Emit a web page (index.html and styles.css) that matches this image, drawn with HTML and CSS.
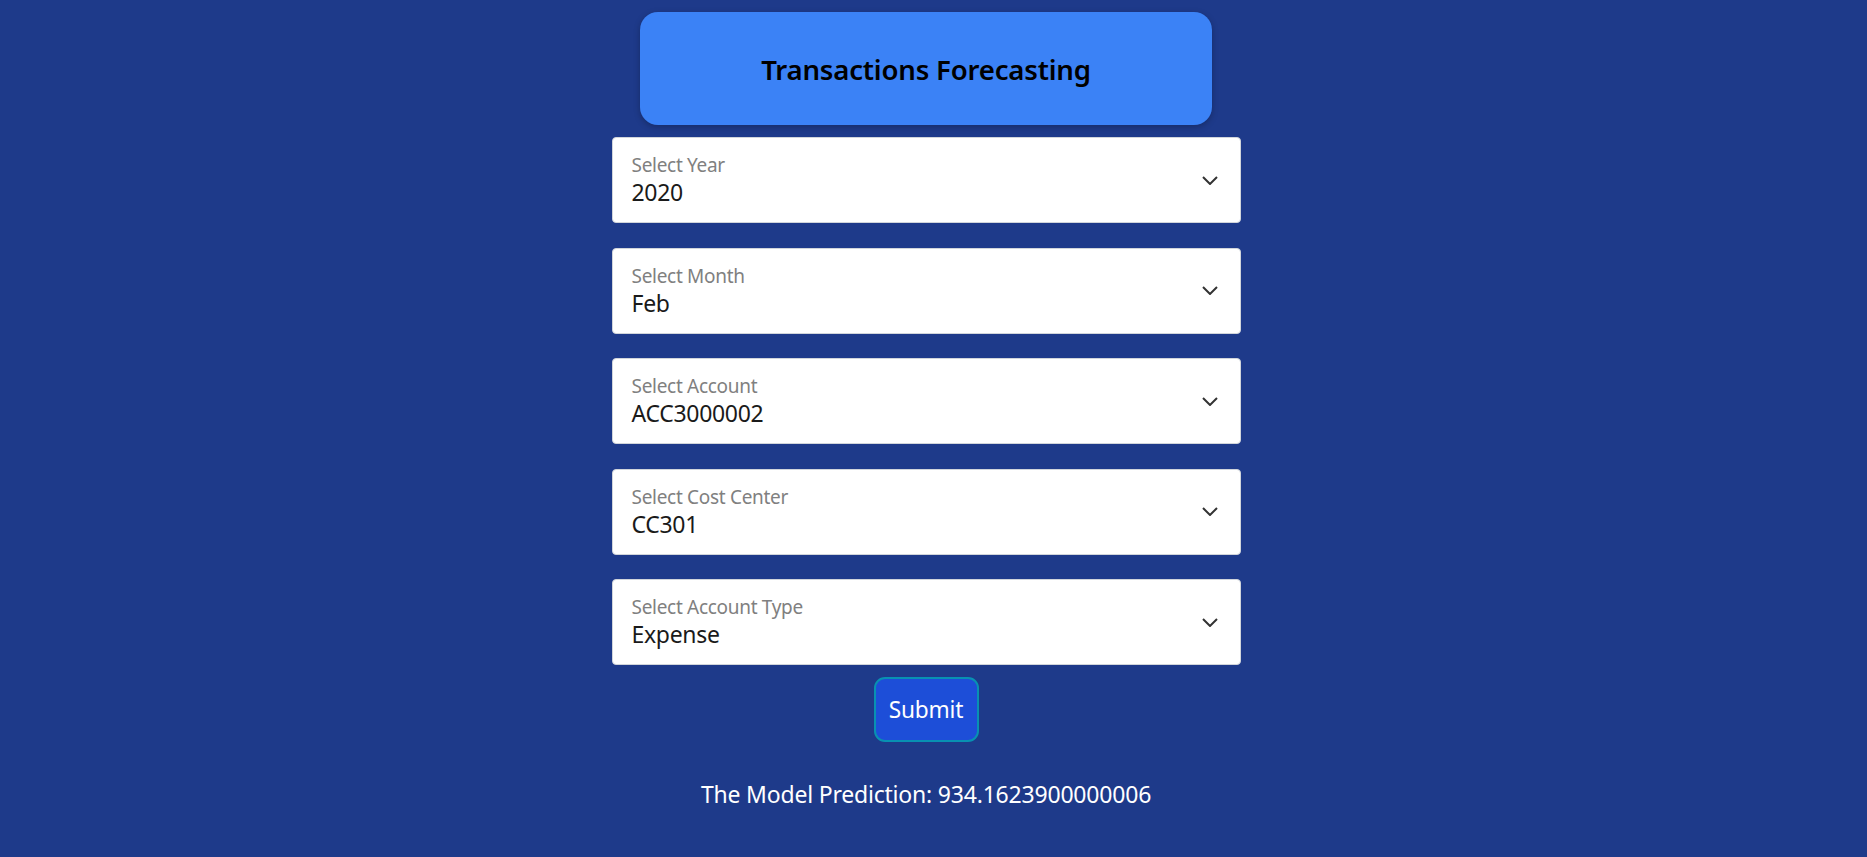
FILE: index.html
```html
<!DOCTYPE html>
<html lang="en">
<head>
<meta charset="utf-8">
<title>Transactions Forecasting</title>
<link rel="stylesheet" href="styles.css">
</head>
<body>
<main class="page">
  <div class="column">
    <header class="title-card">
      <h1 class="title">Transactions Forecasting</h1>
    </header>
    <form class="form">
      <div class="field">
        <div class="field-text">
          <span class="field-label">Select Year</span>
          <span class="field-value">2020</span>
        </div>
        <svg class="chevron" viewBox="0 0 16 9" width="16" height="9"><path d="M1 1l7 7 7-7" fill="none" stroke="#333" stroke-width="2"/></svg>
      </div>
      <div class="field">
        <div class="field-text">
          <span class="field-label">Select Month</span>
          <span class="field-value">Feb</span>
        </div>
        <svg class="chevron" viewBox="0 0 16 9" width="16" height="9"><path d="M1 1l7 7 7-7" fill="none" stroke="#333" stroke-width="2"/></svg>
      </div>
      <div class="field">
        <div class="field-text">
          <span class="field-label">Select Account</span>
          <span class="field-value">ACC3000002</span>
        </div>
        <svg class="chevron" viewBox="0 0 16 9" width="16" height="9"><path d="M1 1l7 7 7-7" fill="none" stroke="#333" stroke-width="2"/></svg>
      </div>
      <div class="field">
        <div class="field-text">
          <span class="field-label">Select Cost Center</span>
          <span class="field-value">CC301</span>
        </div>
        <svg class="chevron" viewBox="0 0 16 9" width="16" height="9"><path d="M1 1l7 7 7-7" fill="none" stroke="#333" stroke-width="2"/></svg>
      </div>
      <div class="field">
        <div class="field-text">
          <span class="field-label">Select Account Type</span>
          <span class="field-value">Expense</span>
        </div>
        <svg class="chevron" viewBox="0 0 16 9" width="16" height="9"><path d="M1 1l7 7 7-7" fill="none" stroke="#333" stroke-width="2"/></svg>
      </div>
      <div class="actions">
        <button type="button" class="submit">Submit</button>
      </div>
    </form>
    <p class="prediction">The Model Prediction: 934.1623900000006</p>
  </div>
</main>
</body>
</html>
```
FILE: styles.css
```css
html, body {
  margin: 0;
  padding: 0;
  background: #1e3a8a;
  height: 100%;
}
body {
  font-family: "Noto Sans", "Open Sans", sans-serif;
  overflow: hidden;
}
.page {
  display: flex;
  justify-content: center;
  padding: 12px 15px 0 0;
}
.column {
  width: 629px;
  display: flex;
  flex-direction: column;
  align-items: center;
}
.title-card {
  width: 572px;
  height: 113px;
  box-sizing: border-box;
  background: #3b82f6;
  border-radius: 18px;
  box-shadow: 0 2px 6px rgba(0,0,0,0.25);
  display: flex;
  align-items: center;
  justify-content: center;
}
.title {
  margin: 0;
  font-size: 27.6px;
  font-weight: 600;
  color: #000;
  letter-spacing: -0.2px;
}
.form {
  width: 100%;
  margin-top: 12px;
  display: flex;
  flex-direction: column;
  gap: 24.5px;
}
.field {
  height: 86px;
  box-sizing: border-box;
  background: #fff;
  border: 1px solid #d1d5db;
  border-radius: 4px;
  display: flex;
  align-items: center;
  padding: 0 22px 0 19px;
}
.field-text {
  flex: 1;
  display: flex;
  flex-direction: column;
  margin-top: 0;
}
.field-label {
  font-size: 19px;
  color: #808080;
  line-height: 24px;
  letter-spacing: -0.3px;
}
.field-value {
  font-size: 23px;
  color: #1a1a1a;
  line-height: 30px;
  letter-spacing: -0.3px;
}
.chevron {
  flex: none;
  display: block;
}
.actions {
  display: flex;
  justify-content: center;
  margin-top: -12.5px;
}
.submit {
  width: 105px;
  height: 65px;
  box-sizing: border-box;
  background: #1d4ed8;
  border: 2px solid #0891b2;
  border-radius: 11px;
  color: #fff;
  font-family: "Noto Sans", "Open Sans", sans-serif;
  font-size: 22.7px;
  padding: 0;
  letter-spacing: -0.2px;
}
.prediction {
  margin: 36px 0 0;
  color: #fff;
  font-size: 23px;
  letter-spacing: -0.2px;
}
```
